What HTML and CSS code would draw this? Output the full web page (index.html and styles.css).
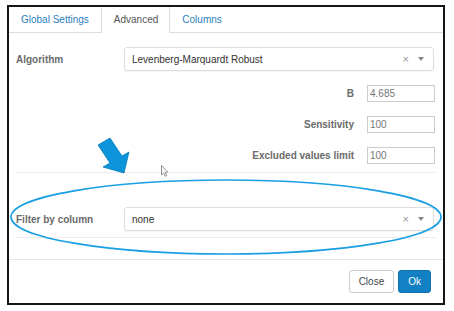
FILE: index.html
```html
<!DOCTYPE html>
<html lang="en">
<head>
  <meta charset="UTF-8" />
  <title>Advanced settings</title>
  <link rel="stylesheet" href="styles.css">
</head>
<body>
  <div class="frame">
    <ul class="tabs">
      <li class="tab">Global Settings</li>
      <li class="tab active">Advanced</li>
      <li class="tab">Columns</li>
    </ul>
    <div class="panel">
      <div class="row wide">
        <label>Algorithm</label>
        <div class="select">
          <span class="value">Levenberg-Marquardt Robust</span>
          <span class="clear">×</span>
          <span class="caret"></span>
        </div>
      </div>
      <div class="row narrow">
        <label>B</label>
        <div class="input">4.685</div>
      </div>
      <div class="row narrow">
        <label>Sensitivity</label>
        <div class="input">100</div>
      </div>
      <div class="row narrow">
        <label>Excluded values limit</label>
        <div class="input">100</div>
      </div>
      <hr class="sep">
      <div class="row wide filter">
        <label>Filter by column</label>
        <div class="select">
          <span class="value">none</span>
          <span class="clear">×</span>
          <span class="caret"></span>
        </div>
      </div>
      <hr class="sep last">
    </div>
    <div class="footer">
      <button class="btn">Close</button>
      <button class="btn primary">Ok</button>
    </div>
  </div>

  <!-- annotation drawn over the dialog -->
  <svg class="overlay" width="454" height="311" viewBox="0 0 454 311">
    <ellipse cx="226" cy="217" rx="215" ry="37" fill="none" stroke="#1a9fe3" stroke-width="1.6"/>
    <polygon points="98,145 110,138 122,156 129,152 124,173 103,167 110,163" fill="#0b93dc" stroke="#0a78b8" stroke-width="0.8" stroke-linejoin="round"/>
    <path d="M161.5 165.5 L161.5 175 L163.6 173 L165.2 176.3 L166.6 175.6 L165 172.4 L167.8 172.2 Z" fill="#fff" stroke="#777" stroke-width="0.8" stroke-linejoin="round"/>
  </svg>
</body>
</html>
```

FILE: styles.css
```css
body {
  margin: 0;
  position: relative;
  background: #fff;
  font-family: "Liberation Sans", Arial, sans-serif;
  font-size: 10px;
  color: #333;
}

.frame {
  width: 434px;
  height: 296px;
  margin: 5px 0 0 7px;
  border: 2px solid #151515;
  background: #fff;
}

/* tabs */
.tabs {
  display: flex;
  list-style: none;
  margin: 0;
  padding: 0;
  height: 25px;
  border-bottom: 1px solid #ddd;
}
.tab {
  padding: 0 12px;
  line-height: 25px;
  color: #2b80bd;
}
.tab.active {
  color: #555;
  background: #fff;
  height: 26px;
  padding: 0 11px 0 12px;
  border-left: 1px solid #ddd;
  border-right: 1px solid #ddd;
}

/* form */
.panel {
  padding: 14px 9px 0 7px;
}
.row {
  display: flex;
  align-items: center;
}
.row label {
  font-weight: bold;
  color: #6a6a6a;
}
.row.wide label {
  width: 108px;
}
.row.narrow {
  justify-content: flex-end;
  gap: 13px;
  margin-top: 14px;
  margin-right: -1px;
}
.row.filter {
  margin-top: 34px;
}

.select {
  flex: 1;
  display: flex;
  align-items: center;
  height: 24px;
  box-sizing: border-box;
  padding: 0 9px 0 7px;
  border: 1px solid #ddd;
  border-radius: 3px;
  box-shadow: 0 1px 1px rgba(0, 0, 0, 0.04);
}
.select .value {
  flex: 1;
  color: #333;
}
.select .clear {
  color: #999;
  font-size: 11px;
  margin-right: 9px;
}
.select .caret {
  width: 0;
  height: 0;
  border-left: 3px solid transparent;
  border-right: 3px solid transparent;
  border-top: 4px solid #888;
}

.input {
  width: 68px;
  height: 17px;
  box-sizing: border-box;
  padding-left: 2px;
  border: 1px solid #ccc;
  line-height: 15px;
  color: #777;
}

.sep {
  height: 0;
  margin: 8px -2px 0 0;
  border: none;
  border-top: 1px solid #eee;
}
.sep.last {
  margin-top: 6px;
}

/* footer */
.footer {
  display: flex;
  justify-content: flex-end;
  gap: 4px;
  margin-top: 21px;
  padding: 10px 12px;
  border-top: 1px solid #e5e5e5;
}
.btn {
  height: 23px;
  padding: 0 9px;
  font-family: inherit;
  font-size: 10px;
  color: #444;
  background: #fff;
  border: 1px solid #ccc;
  border-radius: 3px;
}
.btn.primary {
  color: #fff;
  background: #1380c3;
  border-color: #0f72ad;
}

.overlay {
  position: absolute;
  top: 0;
  left: 0;
  pointer-events: none;
}
```
